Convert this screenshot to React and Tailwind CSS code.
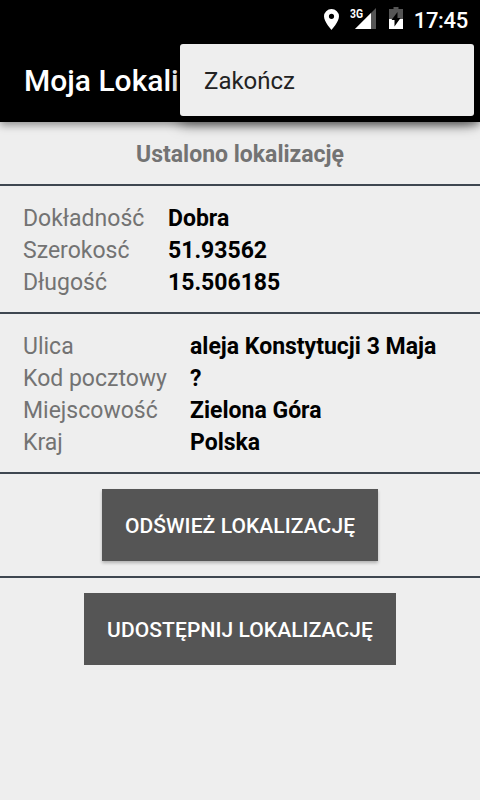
function Row({ label, value, w }) {
  return (
    <div className="flex h-8 items-center text-[23px] leading-8">
      <span className={w + " shrink-0 text-[#737373]"}>{label}</span>
      <span className="font-bold text-black">{value}</span>
    </div>
  );
}

function StatusBar() {
  return (
    <div className="flex h-[40px] items-start justify-end bg-black pr-3 text-white">
      <svg width="16" height="22" viewBox="0 0 16 22" className="mr-[10px] mt-[9px]">
        <path fill="#fff" fillRule="evenodd" d="M7.500 0A7.500 7.300 0 0 0 0 7.300C0 12.800 7.500 21 7.500 21s7.500-8.200 7.500-13.700A7.500 7.300 0 0 0 7.500 0Zm0 4.700a2.600 2.600 0 1 1 0 5.200 2.600 2.600 0 0 1 0-5.200Z" />
      </svg>
      <svg width="26" height="24" viewBox="0 0 26 24" className="mr-[13px] mt-[6px]">
        <path fill="#555" d="M26 2v21H5Z" />
        <path fill="#fff" d="M21 7v16H5Z" />
        <text x="0" y="11.500" textLength="13" lengthAdjust="spacingAndGlyphs" fill="#fff" stroke="#000" strokeWidth="1.500" paintOrder="stroke" fontFamily="Roboto" fontWeight="700" fontSize="12">3G</text>
      </svg>
      <svg width="14" height="22" viewBox="0 0 14 22" className="mr-[11px] mt-[7px]">
        <path fill="#555" d="M4.500 0h5v2H14v10H0V2h4.500Z" />
        <path fill="#fff" d="M0 12h14v10H0Z" />
        <path fill="#000" d="M8.500 5v6H11.500l-6 8.500v-6.500H2.500Z" />
      </svg>
      <span className="pt-px text-[22px] font-medium leading-[39px] tracking-[-0.3px]">17:45</span>
    </div>
  );
}

function Button({ children, className }) {
  return (
    <button className={"mx-auto flex h-[72px] items-center justify-center bg-[#555555] pt-[3px] text-[21px] font-medium tracking-[0.09px] text-white " + className}>
      {children}
    </button>
  );
}

export default function App() {
  return (
    <div className="relative h-[800px] w-[480px] overflow-hidden bg-[#eeeeee] font-[Roboto,sans-serif]">
      <StatusBar />
      <header className="flex h-[82px] items-center bg-black pb-[2px] pl-6 text-[30px] font-medium text-white shadow-[0_3px_8px_rgba(0,0,0,0.4)]">
        <h1 className="whitespace-nowrap">Moja Lokali</h1>
      </header>
      <div className="absolute left-[180px] top-[44px] flex h-[72px] w-[294px] items-center rounded-[3px] bg-[#eeeeee] pl-6 pt-[2px] text-[24px] text-[#222222] shadow-[0_8px_14px_rgba(0,0,0,0.5)]">
        Zakończ
      </div>
      <div className="flex h-16 items-center justify-center border-b-2 border-[#3e4650] pt-1 text-[23px] font-bold text-[#737373]">
        Ustalono lokalizację
      </div>
      <section className="h-32 border-b-2 border-[#3e4650] pl-[23px] pt-[17px]">
        <Row w="w-[145px]" label="Dokładność" value="Dobra" />
        <Row w="w-[145px]" label="Szerokosć" value="51.93562" />
        <Row w="w-[145px]" label="Długość" value="15.506185" />
      </section>
      <section className="h-40 border-b-2 border-[#3e4650] pl-[23px] pt-[17px]">
        <Row w="w-[167px]" label="Ulica" value="aleja Konstytucji 3 Maja" />
        <Row w="w-[167px]" label="Kod pocztowy" value="?" />
        <Row w="w-[167px]" label="Miejscowość" value="Zielona Góra" />
        <Row w="w-[167px]" label="Kraj" value="Polska" />
      </section>
      <div className="h-[104px] border-b-2 border-[#3e4650] pt-[15px]">
        <Button className="w-[276px] shadow-[0_2px_3px_rgba(0,0,0,0.25)]">ODŚWIEŻ LOKALIZACJĘ</Button>
      </div>
      <div className="pt-[15px]">
        <Button className="w-[312px]">UDOSTĘPNIJ LOKALIZACJĘ</Button>
      </div>
    </div>
  );
}
